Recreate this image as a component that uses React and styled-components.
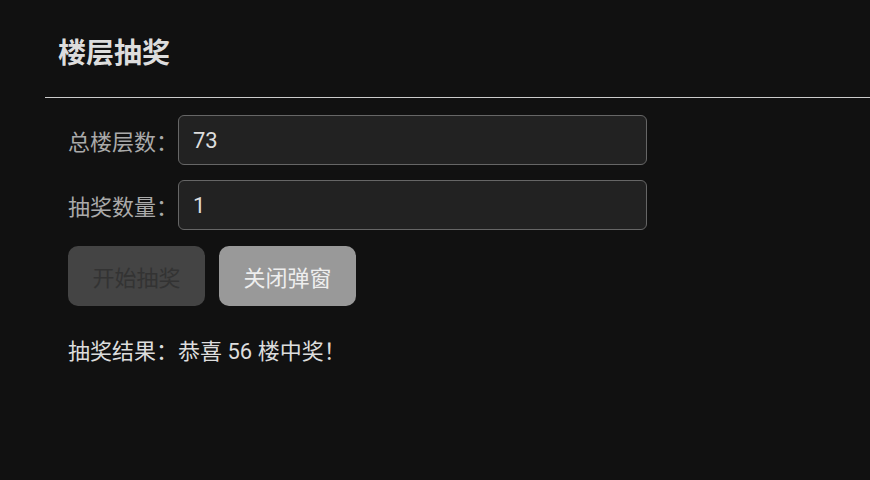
import styled, { createGlobalStyle } from 'styled-components';

const GlobalStyle = createGlobalStyle`
  html, body {
    margin: 0;
    background: #111;
    font-family: Roboto, "Noto Sans CJK SC", sans-serif;
  }
`;

// 弹窗外层
const Modal = styled.div`
  padding-left: 45px;
`;

// 标题栏
const Header = styled.div`
  height: 98px;
  box-sizing: border-box;
  padding: 36px 13px 0;
  border-bottom: 1px solid #ccc;
`;

const Title = styled.h2`
  margin: 0;
  font-size: 28px;
  line-height: 36px;
  font-weight: 700;
  color: #ddd;
`;

const Body = styled.div`
  padding: 17px 23px 0;
  display: flex;
  flex-direction: column;
  gap: 15px;
`;

const Row = styled.div`
  display: flex;
  align-items: center;
  gap: 0;
`;

const Label = styled.label`
  font-size: 22px;
  color: #aaa;
  width: 110px;
  white-space: nowrap;
`;

const Input = styled.input`
  width: 469px;
  height: 50px;
  box-sizing: border-box;
  padding: 0 14px;
  background: #222;
  border: 1px solid #666;
  border-radius: 6px;
  color: #ddd;
  font-family: inherit;
  font-size: 22px;
  outline: none;
`;

const Actions = styled.div`
  display: flex;
  gap: 14px;
  margin-top: 1px;
`;

const Button = styled.button`
  width: 137px;
  height: 60px;
  border: none;
  border-radius: 10px;
  font-family: inherit;
  font-size: 22px;
  background: ${(p) => (p.$primary ? '#444' : '#999')};
  color: ${(p) => (p.$primary ? '#333' : '#eee')};
  cursor: pointer;
`;

const Result = styled.p`
  margin: 15px 0 0;
  font-size: 22px;
  line-height: 32px;
  color: #ddd;
`;

const App = () => {
  return (
    <>
      <GlobalStyle />
      <Modal>
        <Header>
          <Title>楼层抽奖</Title>
        </Header>
        <Body>
          <Row>
            <Label>总楼层数：</Label>
            <Input defaultValue="73" />
          </Row>
          <Row>
            <Label>抽奖数量：</Label>
            <Input defaultValue="1" />
          </Row>
          <Actions>
            <Button $primary disabled>开始抽奖</Button>
            <Button>关闭弹窗</Button>
          </Actions>
          <Result>抽奖结果：恭喜 56 楼中奖！</Result>
        </Body>
      </Modal>
    </>
  );
};

export default App;
